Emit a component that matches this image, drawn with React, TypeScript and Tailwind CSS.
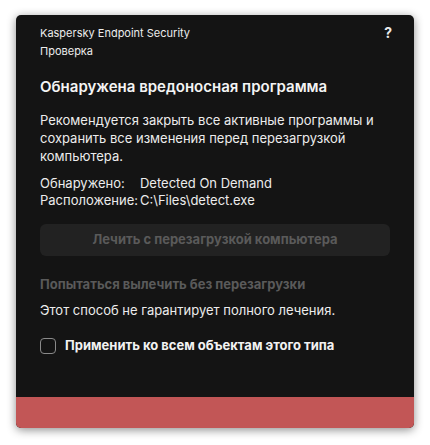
import React from "react";

export default function App() {
  return (
    <div className="w-[430px] h-[445px] bg-white pt-[15px] px-[16px]" style={{ fontFamily: "Inter, 'Noto Sans', sans-serif" }}>
      <div className="w-[398px] h-[413px] rounded-[5px] overflow-hidden bg-[#141414] flex flex-col shadow-[0_2px_10px_rgba(0,0,0,0.45)]">
        <div className="flex-1 flex flex-col px-6 pt-[9px]">
          <div className="flex justify-between items-start">
            <div className="text-[11px] leading-[18px] text-[#ececec]">
              <div>Kaspersky Endpoint Security</div>
              <div>Проверка</div>
            </div>
            <div className="text-[14px] font-bold text-[#ececec] leading-[18px] -mr-[2px]">?</div>
          </div>
          <div className="mt-[17px] text-[15px] font-semibold leading-[20px] text-[#f4f4f4]">
            Обнаружена вредоносная программа
          </div>
          <div className="mt-[14px] text-[13px] leading-[18px] text-[#ececec]">
            Рекомендуется закрыть все активные программы и сохранить все изменения перед перезагрузкой компьютера.
          </div>
          <div className="mt-[10px] grid grid-cols-[auto_1fr] gap-x-[2px] text-[13px] leading-[17px] text-[#ececec]">
            <div>Обнаружено:</div>
            <div>Detected On Demand</div>
            <div>Расположение:</div>
            <div>C:\Files\detect.exe</div>
          </div>
          <button className="mt-[15px] h-[32px] rounded-[6px] bg-[#222222] text-[13px] font-bold text-[#5a5a5a]">
            Лечить с перезагрузкой компьютера
          </button>
          <div className="mt-[20px] text-[13px] font-bold leading-[16px] text-[#5a5a5a]">
            Попытаться вылечить без перезагрузки
          </div>
          <div className="mt-[9px] text-[13px] leading-[18px] text-[#ececec]">
            Этот способ не гарантирует полного лечения.
          </div>
          <label className="mt-[17px] flex items-center gap-[9px]">
            <span className="w-[16px] h-[16px] rounded-[4px] border border-[#8a8a8a]" />
            <span className="text-[13px] font-bold text-[#f2f2f2]">Применить ко всем объектам этого типа</span>
          </label>
        </div>
        <div className="h-[31px] bg-[#c25656]" />
      </div>
    </div>
  );
}
